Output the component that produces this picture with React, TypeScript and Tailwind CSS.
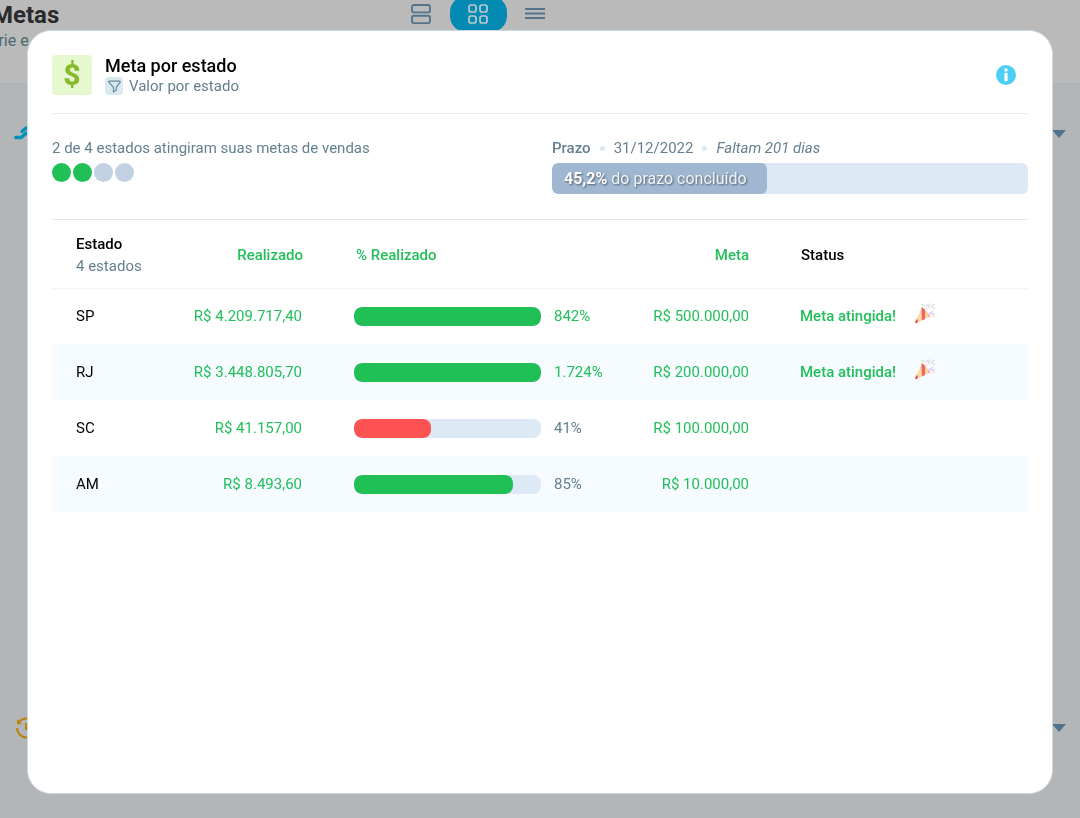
import { useState } from 'react';
import clsx from 'clsx';

const rows = [
    { uf: 'SP', realizado: 'R$ 4.209.717,40', pct: 842, pctLabel: '842%', meta: 'R$ 500.000,00' },
    { uf: 'RJ', realizado: 'R$ 3.448.805,70', pct: 1724, pctLabel: '1.724%', meta: 'R$ 200.000,00' },
    { uf: 'SC', realizado: 'R$ 41.157,00', pct: 41, pctLabel: '41%', meta: 'R$ 100.000,00' },
    { uf: 'AM', realizado: 'R$ 8.493,60', pct: 85, pctLabel: '85%', meta: 'R$ 10.000,00' },
];

function RowsIcon() {
    return (
        <svg width="20" height="20" viewBox="0 0 20 20" fill="none" stroke="currentColor" strokeWidth="1.9">
            <rect x="1" y="1" width="18" height="7.4" rx="2" />
            <rect x="1" y="11.8" width="18" height="7.4" rx="2" />
        </svg>
    );
}

function GridIcon() {
    return (
        <svg width="20" height="20" viewBox="0 0 20 20" fill="none" stroke="currentColor" strokeWidth="1.7">
            <rect x="1" y="1" width="7" height="7" rx="2" />
            <rect x="12" y="1" width="7" height="7" rx="2" />
            <rect x="1" y="12" width="7" height="7" rx="2" />
            <rect x="12" y="12" width="7" height="7" rx="2" />
        </svg>
    );
}

function LinesIcon() {
    return (
        <svg width="20" height="20" viewBox="0 0 20 20" fill="none" stroke="currentColor" strokeWidth="2">
            <path d="M0 5h20M0 9.5h20M0 14h20" />
        </svg>
    );
}

function TrendIcon() {
    return (
        <svg width="24" height="18" viewBox="0 0 24 18" fill="none" stroke="#0390b9" strokeWidth="3.4" strokeLinecap="round" strokeLinejoin="round">
            <path d="M1.8 12.5h5.5l5-4.5 4 2 6-8" />
            <path d="M8 6.500 12 3l4 2" />
        </svg>
    );
}

function HistoryIcon() {
    return (
        <svg width="24" height="24" viewBox="0 0 24 24" fill="none" stroke="#bd8108" strokeWidth="2">
            <path d="M3 12a9.5 9.5 0 0 0 9.5 9.5 9.500 9.500 0 0 0 0-19C9.500 2.500 7 3.500 4.500 6" />
            <path d="M3 3.200v5h5z" fill="#bd8108" stroke="none" />
            <path d="M12 7v6l4 2" />
        </svg>
    );
}

function Caret() {
    return (
        <svg width="14" height="8" viewBox="0 0 14 8" fill="#50728a">
            <path d="M0 0h14L7 8z" />
        </svg>
    );
}

function FunnelIcon() {
    return (
        <svg width="13" height="13" viewBox="0 0 13 13" fill="none" stroke="#64899b" strokeWidth="1.2" strokeLinejoin="round">
            <path d="M1.4 1.2h10.2c.6 0 .8.6.5 1L8.3 7.3v3L5.5 12V7.3L.9 2.2c-.3-.4-.1-1 .5-1z" />
        </svg>
    );
}

function InfoIcon() {
    return (
        <svg width="20" height="20" viewBox="0 0 20 20">
            <circle cx="10" cy="10" r="10" fill="#4dcff3" />
            <circle cx="10" cy="5" r="1.7" fill="#fff" />
            <rect x="8.4" y="7.8" width="3.2" height="8.4" rx="1" fill="#fff" />
        </svg>
    );
}

function PartyIcon() {
    return (
        <svg width="22" height="20" viewBox="0 0 22 20">
            <path d="M1 19.6 8.2 4.2c1.6.6 6.8 6.4 7.8 9.2L3 19.8c-1 .3-2 .3-2-.2z" fill="#ffd79a" />
            <path d="M8.2 4.2c1 .6 2 1.6 3 2.7l-.2 9-3 1.5-.6-11.4z" fill="#e8686f" />
            <path d="M1 19.6 3 15.4l1 3.9-1 .5c-1 .3-2 .3-2-.2z" fill="#d94c59" />
            <path d="M13.6 9.6c1 1.2 2 2.6 2.4 3.8l-1.6.8z" fill="#f7a9a0" />
            <g fill="#dccbf7">
                <rect x="12" y="1.6" width="3" height="1.4" />
                <rect x="14.4" y="3.2" width="1.6" height="1.6" />
                <rect x="15" y="9.4" width="3" height="1.6" />
                <rect x="17.6" y="10.6" width="3.2" height="1.4" />
                <rect x="17.4" y="8" width="1.6" height="1.6" />
            </g>
            <g fill="#cdebc9">
                <rect x="7.4" y="0.8" width="2.6" height="1.4" />
                <rect x="9.4" y="2.2" width="1.4" height="2" />
                <rect x="17.2" y="1.6" width="1.6" height="3" />
                <rect x="18.8" y="4.6" width="2" height="1.4" />
            </g>
            <g fill="#f8c9d1">
                <rect x="15.2" y="0.4" width="1.4" height="1.4" />
                <rect x="19.4" y="1" width="1.4" height="1.4" />
                <rect x="19.2" y="12.6" width="1.6" height="1.4" />
                <rect x="15.4" y="13" width="1.4" height="1.4" />
                <rect x="12" y="5" width="1.4" height="1.4" />
            </g>
        </svg>
    );
}

const views = [
    { id: 'rows', label: 'Lista', Icon: RowsIcon },
    { id: 'grid', label: 'Grade', Icon: GridIcon },
    { id: 'lines', label: 'Compacto', Icon: LinesIcon },
];

function GoalsPage() {
    const [view, setView] = useState('grid');

    return (
        <div className="min-h-screen overflow-hidden bg-[#b4b5b7]">
            <header className="flex h-[84px] items-start border-b border-[#a9b1ba] bg-[#bababa]">
                <div className="-ml-2 w-[401px] pt-px">
                    <h1 className="text-2xl leading-7 font-bold text-[#2a2b2c]">Metas</h1>
                    <p className="-ml-1 text-base leading-6 text-[#50686f]">Crie e</p>
                </div>
                <nav className="-mt-1 flex">
                    {views.map(({ id, label, Icon }) => (
                        <button
                            key={id}
                            aria-label={label}
                            onClick={() => setView(id)}
                            className={clsx(
                                'flex h-9 w-[57px] items-center rounded-2xl pl-[18px]',
                                view === id ? 'bg-[#028ab3] text-[#bcc9ce]' : 'text-[#54748c]'
                            )}
                        >
                            <Icon />
                        </button>
                    ))}
                </nav>
            </header>

            <section className="h-[594px] px-[14px] pt-[38px]">
                <div className="flex h-6 items-center justify-between">
                    <TrendIcon />
                    <Caret />
                </div>
            </section>
            <section className="px-[14px] pt-[38px]">
                <div className="flex h-6 items-center justify-between">
                    <HistoryIcon />
                    <Caret />
                </div>
            </section>
        </div>
    );
}

function Bullet() {
    return <span className="h-[5px] w-[5px] rounded-full bg-[#d9e7f3]" />;
}

function ProgressBar({ pct }: { pct: number }) {
    return (
        <div className="h-[19px] w-[187px] overflow-hidden rounded-lg bg-[#dde9f5]">
            <div
                className={clsx('h-full rounded-lg', pct < 50 ? 'bg-[#ff5252]' : 'bg-[#21c056]')}
                style={{ width: `${Math.min(pct, 100)}%` }}
            />
        </div>
    );
}

export default function App() {
    const atingidas = rows.filter(r => r.pct >= 100).length;

    return (
        <div className="font-[Roboto,sans-serif] text-[15px] leading-5 text-[#64808f]">
            <GoalsPage />

            {/* Modal */}
            <div className="fixed inset-0 flex px-[27px] pt-[30px] pb-6">
                <div role="dialog" aria-labelledby="modal-title" className="flex-1 overflow-auto rounded-3xl border border-[#cbd9e5] bg-white p-6">
                    <div className="flex items-start border-b border-[#e4ecf3] pb-[18px]">
                        <div className="flex h-10 w-10 items-center justify-center rounded bg-[#e6f8cf] text-3xl font-extrabold text-[#86bb2c]">$</div>
                        <div className="ml-[13px] h-10 flex-1">
                            <h2 id="modal-title" className="text-lg leading-[22px] font-medium text-black">Meta por estado</h2>
                            <div className="flex h-[18px] items-center gap-1.5">
                                <span className="flex h-[18px] w-[18px] items-center justify-center rounded-sm bg-[#d9e9ef]">
                                    <FunnelIcon />
                                </span>
                                Valor por estado
                            </div>
                        </div>
                        <button aria-label="Informações" className="mt-2.5 mr-3">
                            <InfoIcon />
                        </button>
                    </div>

                    <div className="grid grid-cols-2 gap-6 border-b border-[#e0e6eb] pt-6 pb-[25px]">
                        <div>
                            <p>{atingidas} de {rows.length} estados atingiram suas metas de vendas</p>
                            <div className="mt-[5px] flex gap-0.5">
                                {rows.map((r, i) => (
                                    <span
                                        key={r.uf}
                                        className={clsx('h-[19px] w-[19px] rounded-full', i < atingidas ? 'bg-[#21c056]' : 'bg-[#c2d1e1]')}
                                    />
                                ))}
                            </div>
                        </div>
                        <div>
                            <div className="flex items-center gap-[9px]">
                                <span className="font-medium">Prazo</span>
                                <Bullet />
                                <span>31/12/2022</span>
                                <Bullet />
                                <span className="italic">Faltam 201 dias</span>
                            </div>
                            <div className="mt-[5px] h-[31px] overflow-hidden rounded-md bg-[#dde9f5]">
                                <div
                                    className="flex h-full items-center rounded-md bg-[#a0b7d1] pl-3 text-base whitespace-nowrap text-[#f1f4f8] text-shadow-[1px_1px_2px_rgb(0_0_0/0.5)]"
                                    style={{ width: '45.2%' }}
                                >
                                    <span><b className="font-bold text-white">45,2%</b> do prazo concluído</span>
                                </div>
                            </div>
                        </div>
                    </div>

                    <table className="w-full table-fixed">
                        <colgroup>
                            <col className="w-[116px]" />
                            <col className="w-[160px]" />
                            <col className="w-[290px]" />
                            <col className="w-[157px]" />
                            <col />
                        </colgroup>
                        <thead>
                            <tr className="h-[68px] border-b border-[#eff4f8] text-[#22bf5a]">
                                <th className="pt-[3px] pl-6 text-left leading-[22px] font-medium text-black">
                                    Estado
                                    <div className="font-normal text-[#64808f]">{rows.length} estados</div>
                                </th>
                                <th className="pt-[3px] pr-[25px] text-right font-medium">Realizado</th>
                                <th className="pt-[3px] pl-7 text-left font-medium">% Realizado</th>
                                <th className="pt-[3px] pr-[26px] text-right font-medium">Meta</th>
                                <th className="pt-[3px] pl-[26px] text-left font-medium text-black">Status</th>
                            </tr>
                        </thead>
                        <tbody>
                            {rows.map(r => (
                                <tr key={r.uf} className="h-14 text-[#22bf5a] even:bg-[#f5fbff]">
                                    <td className="pl-6 text-black">{r.uf}</td>
                                    <td className="pr-[26px] text-right">{r.realizado}</td>
                                    <td className="pl-[26px]">
                                        <div className="flex items-center gap-[13px]">
                                            <ProgressBar pct={r.pct} />
                                            <span className={r.pct < 100 ? 'text-[#64808f]' : ''}>{r.pctLabel}</span>
                                        </div>
                                    </td>
                                    <td className="pr-[26px] text-right">{r.meta}</td>
                                    <td className="pl-[25px] font-medium">
                                        {r.pct >= 100 && (
                                            <div className="flex items-center gap-[18px]">
                                                Meta atingida!
                                                <span className="pb-1.5"><PartyIcon /></span>
                                            </div>
                                        )}
                                    </td>
                                </tr>
                            ))}
                        </tbody>
                    </table>
                </div>
            </div>
        </div>
    );
}
